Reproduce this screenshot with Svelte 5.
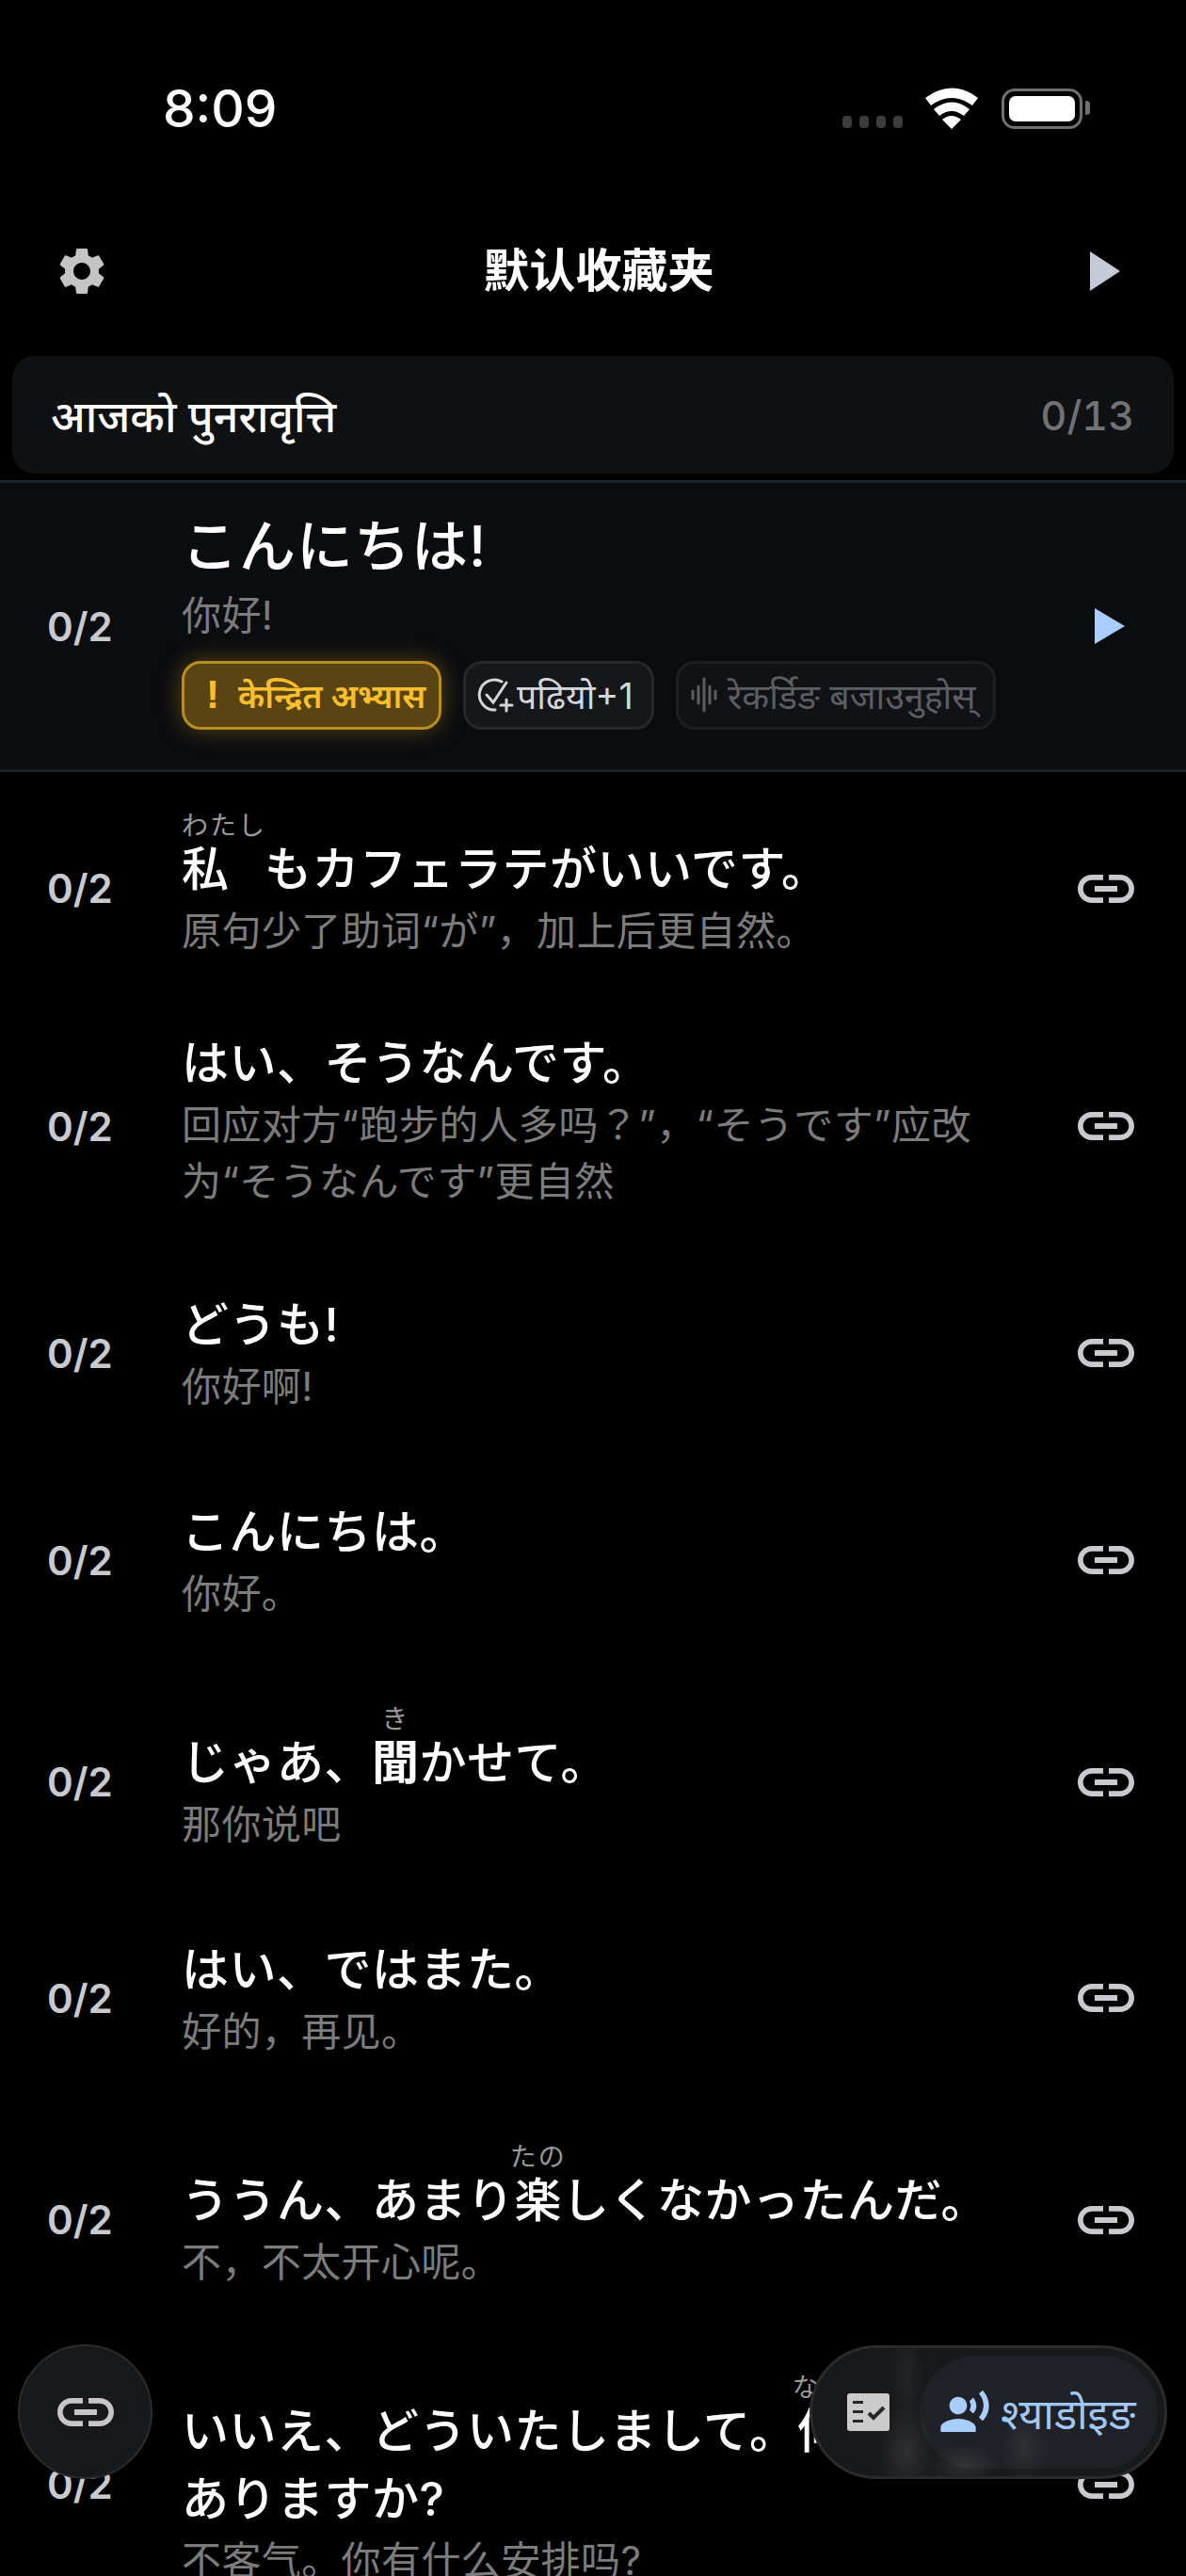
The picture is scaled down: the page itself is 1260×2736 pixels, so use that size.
<script lang="ts">
	const linkPath =
		'M3.9 12c0-1.71 1.39-3.1 3.1-3.1h4V7H7c-2.76 0-5 2.24-5 5s2.24 5 5 5h4v-1.9H7c-1.71 0-3.1-1.39-3.1-3.1zM8 13h8v-2H8v2zm9-6h-4v1.9h4c1.71 0 3.1 1.39 3.1 3.1s-1.39 3.1-3.1 3.1h-4V17h4c2.76 0 5-2.24 5-5s-2.24-5-5-5z';

	const rows = [
		{ note: true, parts: [{ b: '私', r: 'わたし', start: true }, { t: 'もカフェラテがいいです。' }], sub: ['原句少了助词“が”，加上后更自然。'] },
		{ parts: [{ t: 'はい、そうなんです。' }], sub: ['回应对方“跑步的人多吗？”，“そうです”应改', '为“そうなんです”更自然'], tall: true },
		{ parts: [{ t: 'どうも!' }], sub: ['你好啊!'] },
		{ parts: [{ t: 'こんにちは。' }], sub: ['你好。'] },
		{ note: true, parts: [{ t: 'じゃあ、' }, { b: '聞', r: 'き', strong: true }, { t: 'かせて。' }], sub: ['那你说吧'] },
		{ parts: [{ t: 'はい、ではまた。' }], sub: ['好的，再见。'] },
		{ note: true, parts: [{ t: 'ううん、あまり' }, { b: '楽', r: 'たの' }, { t: 'しくなかったんだ。' }], sub: ['不，不太开心呢。'] },
		{ note: true, parts: [{ t: 'いいえ、どういたしまして。' }, { b: '何', r: 'なに' }, { t: 'か' }, { nb: 'ありますか?' }], sub: ['不客气。你有什么安排吗?'] }
	];
</script>

<div class="screen">
	<div class="status">
		<span class="time">8:09</span>
		<div class="status-right">
			<div class="dots"><i></i><i></i><i></i><i></i></div>
			<svg class="wifi" viewBox="0 0 58 44" fill="#fff">
				<path d="M1 11Q29-10 57 11L51 19Q29 3 7 19Z" />
				<path d="M10 23Q29 8 48 23L42 30Q29 20 16 30Z" />
				<path d="M19 34Q29 26 39 34L29 44Z" />
			</svg>
			<div class="battery"><div class="level"></div></div>
		</div>
	</div>

	<header class="top">
		<svg class="gear" viewBox="0 0 24 24" fill="#c4c4c4">
			<path d="M19.14 12.94c.04-.3.06-.61.06-.94 0-.32-.02-.64-.07-.94l2.03-1.58c.18-.14.23-.41.12-.61l-1.92-3.32c-.12-.22-.37-.29-.59-.22l-2.39.96c-.5-.38-1.03-.7-1.62-.94l-.36-2.54c-.04-.24-.24-.41-.48-.41h-3.84c-.24 0-.43.17-.47.41l-.36 2.54c-.59.24-1.13.57-1.62.94l-2.39-.96c-.22-.08-.47 0-.59.22L2.74 8.87c-.12.21-.08.47.12.61l2.03 1.58c-.05.3-.09.63-.09.94s.02.64.07.94l-2.03 1.58c-.18.14-.23.41-.12.61l1.92 3.32c.12.22.37.29.59.22l2.39-.96c.5.38 1.03.7 1.62.94l.36 2.54c.05.24.24.41.48.41h3.84c.24 0 .44-.17.47-.41l.36-2.54c.59-.24 1.13-.56 1.62-.94l2.39.96c.22.08.47 0 .59-.22l1.92-3.32c.12-.22.07-.47-.12-.61l-2.01-1.58zM12 15.6c-1.98 0-3.6-1.62-3.6-3.6s1.62-3.6 3.6-3.6 3.6 1.62 3.6 3.6-1.62 3.6-3.6 3.6z" />
		</svg>
		<h1>默认收藏夹</h1>
		<svg class="play" viewBox="0 0 32 42" fill="#c6c9d6"><path d="M0 0 32 21 0 42z" /></svg>
	</header>

	<div class="review">
		<span class="review-title">आजको पुनरावृत्ति</span>
		<span class="review-count">0/13</span>
	</div>

	<section class="active">
		<span class="count">0/2</span>
		<div class="active-body">
			<div class="active-title">こんにちは!</div>
			<div class="sub">你好!</div>
			<div class="chips">
				<div class="chip focus"><span class="bang">!</span>केन्द्रित अभ्यास</div>
				<div class="chip read">
					<svg viewBox="0 0 42 42" fill="none" stroke="#d4d6da" stroke-width="3" stroke-linecap="round">
						<path d="M28 7A16 16 0 1 0 21 37" />
						<path d="M12 21l7 8L33 8" />
						<path d="M27 32h12M33 26v12" />
					</svg>
					पढियो+1
				</div>
				<div class="chip rec">
					<svg viewBox="0 0 30 42" fill="none" stroke="#5c5e62" stroke-width="3" stroke-linecap="round">
						<path d="M3 17v8M9 12v18M15 4v34M21 12v18M27 17v8" />
					</svg>
					रेकर्डिङ बजाउनुहोस्
				</div>
			</div>
		</div>
		<svg class="active-play" viewBox="0 0 32 38" fill="#a8cdff"><path d="M0 0 32 19 0 38z" /></svg>
	</section>

	{#each rows as row}
		<div class="row" class:tall={row.tall} class:note={row.note}>
			<span class="count">0/2</span>
			<div class="body">
				<div class="main">
					{#each row.parts as p}
						{#if p.b}
							<ruby class:start={p.start} class:strong={p.strong}>{p.b}<rt>{p.r}</rt></ruby>
						{:else if p.nb}
							<span class="nb">{p.nb}</span>
						{:else}
							{p.t}
						{/if}
					{/each}
				</div>
				{#each row.sub as line}
					<div class="sub">{line}</div>
				{/each}
			</div>
			<svg class="link" viewBox="0 0 24 24" fill="#c8cad0"><path d={linkPath} /></svg>
		</div>
	{/each}

	<button class="fab">
		<svg viewBox="0 0 24 24" fill="#c6c6c8"><path d={linkPath} /></svg>
	</button>

	<div class="dock">
		<svg class="tasks" viewBox="0 0 45 40">
			<rect width="45" height="40" rx="3" fill="#cbcbcb" />
			<path d="M6 8h11v3H6zM6 18h11v3H6zM6 28h11v3H6z" fill="#26272a" />
			<path d="M23 21l5 5 11-11" fill="none" stroke="#26272a" stroke-width="4" />
		</svg>
		<div class="shadow-tab">
			<svg viewBox="0 0 24 24" fill="#a8cdff">
				<path d="M9 13c2.21 0 4-1.79 4-4s-1.79-4-4-4-4 1.79-4 4 1.79 4 4 4zm0 2c-2.67 0-8 1.34-8 4v2h16v-2c0-2.66-5.33-4-8-4zm6.76-9.64l-1.68 1.69c.84 1.18.84 2.71 0 3.89l1.68 1.69c2.02-2.02 2.02-5.07 0-7.27zM20.07 2l-1.63 1.63c2.77 3.02 2.77 7.56 0 10.74L20.07 16c3.9-3.89 3.91-9.95 0-14z" />
			</svg>
			<span>श्याडोइङ</span>
		</div>
		<div class="wisps"></div>
	</div>
</div>

<style>
	:global(body) {
		margin: 0;
		background: #000;
	}

	.screen {
		position: relative;
		width: 1260px;
		height: 2736px;
		overflow: hidden;
		background: #000;
		color: #fff;
		font-family: Inter, "Noto Sans", "Noto Sans CJK JP", "Noto Sans CJK SC", sans-serif;
	}

	.status {
		height: 230px;
		padding: 83px 102px 0 173px;
		box-sizing: border-box;
		display: flex;
		justify-content: space-between;
		align-items: flex-start;
	}

	.time {
		font-size: 55px;
		font-weight: 500;
		line-height: 64px;
	}

	.status-right {
		display: flex;
		align-items: flex-end;
		padding-top: 10px;
	}

	.dots {
		display: flex;
		gap: 8px;
		margin-right: 23px;
		margin-bottom: 1px;
	}

	.dots i {
		width: 10px;
		height: 13px;
		border-radius: 4px;
		background: #3c3c3c;
	}

	.wifi {
		width: 58px;
		height: 44px;
		margin-right: 24px;
	}

	.battery {
		position: relative;
		width: 86px;
		height: 43px;
		box-sizing: border-box;
		border: 3px solid #6f6f6f;
		border-radius: 14px;
		padding: 5px;
		margin-right: 8px;
	}

	.battery::after {
		content: '';
		position: absolute;
		right: -11px;
		top: 10px;
		width: 5px;
		height: 15px;
		border-radius: 0 4px 4px 0;
		background: #6f6f6f;
	}

	.level {
		height: 100%;
		border-radius: 7px;
		background: #fff;
	}

	.top {
		height: 116px;
		display: flex;
		align-items: center;
		justify-content: space-between;
		padding: 0 70px 0 57px;
		margin-bottom: 32px;
	}

	.gear {
		width: 60px;
		height: 60px;
	}

	h1 {
		margin: 0 3px 0 0;
		font-size: 49px;
		font-weight: 700;
		line-height: 60px;
	}

	.play {
		width: 32px;
		height: 42px;
	}

	.review {
		margin: 0 13px;
		height: 125px;
		padding: 0 42px;
		border-radius: 24px;
		background: #101113;
		display: flex;
		align-items: center;
		justify-content: space-between;
	}

	.review-title {
		font-size: 46.5px;
		font-weight: 500;
		margin-left: -1px;
	}

	.review-count {
		font-size: 43px;
		font-weight: 500;
		font-variant-numeric: tabular-nums;
		color: #707276;
	}

	.active {
		margin-top: 7px;
		margin-bottom: 2px;
		height: 310px;
		box-sizing: border-box;
		border-top: 3px solid #1c2229;
		border-bottom: 3px solid #1c2229;
		background: #0a0c10;
		display: flex;
		align-items: center;
	}

	.count {
		width: 193px;
		flex-shrink: 0;
		padding-left: 50px;
		box-sizing: border-box;
		font-size: 42px;
		font-weight: 600;
		color: #c8cad0;
	}

	.active-body {
		flex: 1;
		padding-bottom: 20px;
	}

	.active-title {
		font-size: 60px;
		line-height: 88px;
		font-weight: 500;
		letter-spacing: 1px;
	}

	.sub {
		font-size: 42px;
		line-height: 60px;
		letter-spacing: 0.4px;
		color: #7c7c7c;
	}

	.chips {
		display: flex;
		gap: 23px;
		margin-top: 18px;
	}

	.chip {
		height: 73px;
		box-sizing: border-box;
		border-radius: 20px;
		border: 3px solid #26282c;
		background: #15171b;
		display: flex;
		align-items: center;
		font-size: 37.5px;
		color: #d4d6da;
		white-space: nowrap;
		padding: 0 12px;
	}

	.chip svg {
		flex-shrink: 0;
	}

	.focus {
		width: 276px;
		padding-left: 23px;
		border-color: #ba8d24;
		background: #5a4512;
		color: #fabf2c;
		font-size: 35px;
		font-weight: 600;
		box-shadow: 0 0 26px rgba(190, 140, 30, 0.45);
	}

	.bang {
		font-size: 42px;
		font-weight: 700;
		margin-right: 20px;
		font-family: "Liberation Sans", sans-serif;
	}

	.read {
		width: 203px;
	}

	.read svg {
		width: 42px;
		height: 42px;
		margin-left: -2px;
		margin-right: 2px;
	}

	.rec {
		width: 340px;
		background: #101216;
		border-color: #1d1f23;
		color: #5c5e62;
	}

	.rec svg {
		width: 30px;
		height: 42px;
		margin-right: 10px;
	}

	.active-play {
		width: 32px;
		height: 38px;
		margin-right: 65px;
		flex-shrink: 0;
	}

	.row {
		display: flex;
		align-items: center;
		padding: 40px 0 48px;
	}

	.row.note {
		padding-top: 46px;
	}

	.row.tall {
		padding-top: 26px;
		padding-bottom: 32px;
	}

	.row.tall .body {
		padding-bottom: 14px;
	}

	.body {
		flex: 1;
		min-width: 0;
		padding-right: 55px;
		box-sizing: border-box;
	}

	.main {
		font-size: 50px;
		line-height: 72px;
		font-weight: 500;
		letter-spacing: 0.5px;
	}

	.nb {
		display: inline-block;
		white-space: nowrap;
	}

	ruby {
		ruby-position: over;
	}

	ruby.start {
		ruby-align: start;
		margin-right: 12px;
	}

	ruby.strong {
		font-weight: 700;
	}

	rt {
		position: relative;
		top: -6px;
		font-size: 28px;
		font-weight: 400;
		line-height: 37px;
		letter-spacing: 2px;
		color: #9a9a9a;
	}

	.link {
		width: 72px;
		height: 72px;
		flex-shrink: 0;
		margin-right: 49px;
	}

	.fab {
		position: absolute;
		left: 19px;
		top: 2490px;
		width: 143px;
		height: 143px;
		padding: 0;
		box-sizing: border-box;
		border-radius: 50%;
		border: 2px solid #2b2c2e;
		background: #18191b;
		display: flex;
		align-items: center;
		justify-content: center;
	}

	.fab svg {
		width: 72px;
		height: 72px;
	}

	.dock {
		position: absolute;
		left: 860px;
		top: 2491px;
		width: 380px;
		height: 142px;
		box-sizing: border-box;
		border-radius: 71px;
		border: 3px solid #2a2b2d;
		background: #18191b;
		overflow: hidden;
		display: flex;
		align-items: center;
	}

	.wisps {
		position: absolute;
		inset: 0;
		pointer-events: none;
		background:
			radial-gradient(ellipse 30px 50px at 100px 110px, rgba(255, 255, 255, 0.1), transparent),
			radial-gradient(ellipse 26px 40px at 225px 105px, rgba(255, 255, 255, 0.07), transparent),
			radial-gradient(ellipse 18px 60px at 100px 30px, rgba(255, 255, 255, 0.05), transparent),
			radial-gradient(ellipse 40px 24px at 160px 125px, rgba(255, 255, 255, 0.09), transparent);
	}

	.tasks {
		width: 45px;
		height: 40px;
		margin-left: 37px;
		flex-shrink: 0;
	}

	.shadow-tab {
		position: absolute;
		left: 114px;
		top: 8px;
		width: 253px;
		height: 120px;
		border-radius: 60px;
		background: #1f2126;
		display: flex;
		align-items: center;
		padding-left: 20px;
		box-sizing: border-box;
		gap: 10px;
	}

	.shadow-tab svg {
		width: 56px;
		height: 56px;
		flex-shrink: 0;
	}

	.shadow-tab span {
		font-size: 45px;
		color: #a0c8f5;
		white-space: nowrap;
	}
</style>
